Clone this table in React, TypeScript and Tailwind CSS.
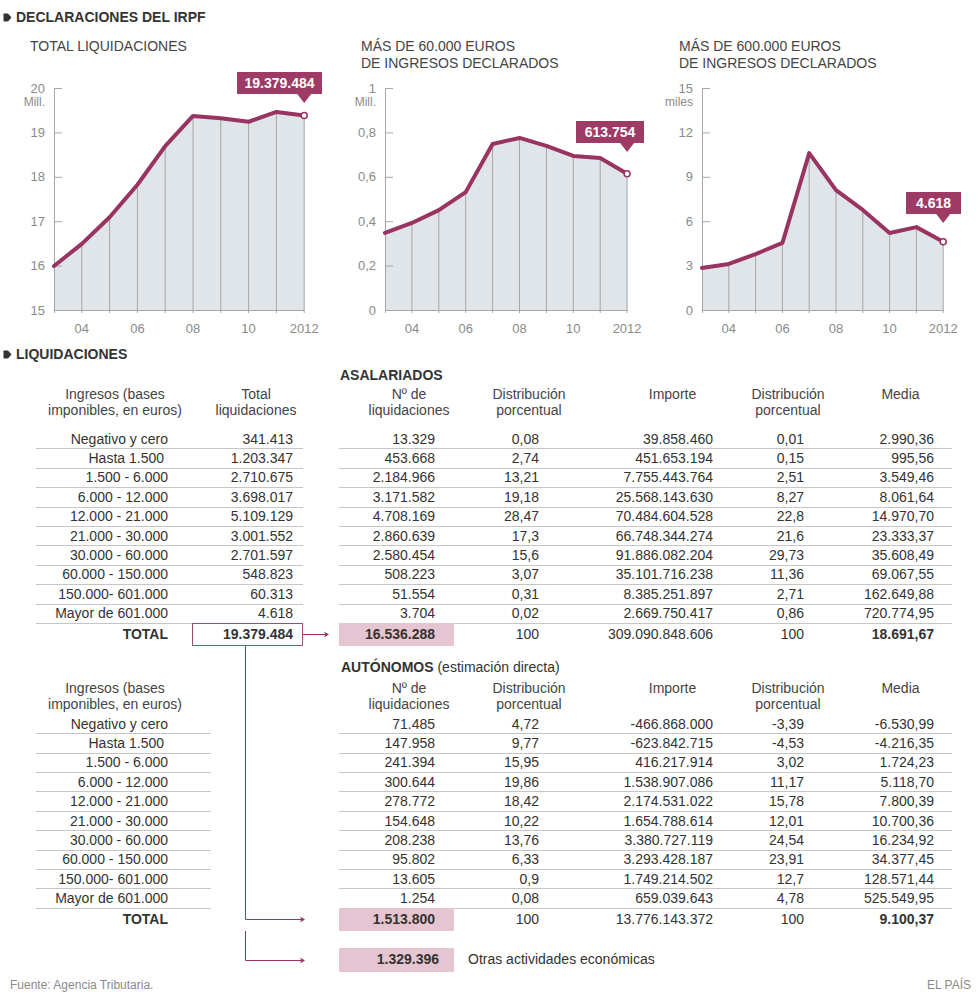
import React from "react";

type ChartProps = {
  width: number;
  x0: number;
  step: number;
  min: number;
  max: number;
  ticks: string[];
  unit: string;
  values: number[];
  label: string;
  boxX: number;
  boxW: number;
  boxY: number;
};

const LINE = "#993462";
const BOX = "#9e3b64";
const GRID = "#a6a6a6";

function Chart({ width, x0, step, min, max, ticks, unit, values, label, boxX, boxW, boxY }: ChartProps) {
  const top = 16;
  const bottom = 238;
  const y = (v: number) => bottom - ((v - min) / (max - min)) * (bottom - top);
  const xs = values.map((_, i) => x0 + i * step);
  const last = xs.length - 1;
  const pts = values.map((v, i) => `${xs[i]},${y(v)}`).join(" ");
  const tickGap = (bottom - top) / (ticks.length - 1);
  const years = ["04", "06", "08", "10", "2012"];

  return (
    <svg width={width} height={268} className="block">
      <polygon points={`${x0},${bottom} ${pts} ${xs[last]},${bottom}`} fill="#dfe5e8" />
      {xs.slice(1).map((x, i) => (
        <line key={i} x1={x} x2={x} y1={y(values[i + 1])} y2={bottom + 3} stroke={GRID} strokeWidth={1} />
      ))}
      <line x1={x0 + 0.5} x2={x0 + 0.5} y1={top} y2={bottom + 3} stroke={GRID} />
      <line x1={x0} x2={xs[last]} y1={bottom + 0.5} y2={bottom + 0.5} stroke={GRID} />
      {ticks.map((t, i) => (
        <g key={t}>
          <line x1={x0} x2={x0 + 8} y1={top + i * tickGap + 0.5} y2={top + i * tickGap + 0.5} stroke={GRID} />
          <text x={x0 - 9} y={top + i * tickGap + 4.5} textAnchor="end" fontSize={13} fill="#8a8a8a">
            {t}
          </text>
        </g>
      ))}
      <text x={x0 - 9} y={top + 18} textAnchor="end" fontSize={12} fill="#8a8a8a">
        {unit}
      </text>
      {years.map((yr, i) => (
        <text key={yr} x={xs[i * 2 + 1]} y={260.5} textAnchor="middle" fontSize={13} fill="#8a8a8a">
          {yr}
        </text>
      ))}
      <polyline points={pts} fill="none" stroke={LINE} strokeWidth={4} strokeLinejoin="round" strokeLinecap="round" />
      <circle cx={xs[last]} cy={y(values[last])} r={3} fill="#fff" stroke={LINE} strokeWidth={1.5} />
      <rect x={boxX} y={boxY} width={boxW} height={22} fill={BOX} />
      <polygon
        points={`${xs[last] - 7},${boxY + 22} ${xs[last] + 7},${boxY + 22} ${xs[last]},${boxY + 31}`}
        fill={BOX}
      />
      <text x={boxX + boxW / 2} y={boxY + 16} textAnchor="middle" fontSize={14} fontWeight={700} fill="#fff">
        {label}
      </text>
    </svg>
  );
}

function Bullet() {
  return (
    <svg width="9" height="9" viewBox="0 0 9 9" className="mr-[4px] shrink-0">
      <path d="M1.2 0.5 H5 L8.5 4.5 L5 8.5 H1.2 Q0.5 8.5 0.5 7.8 V1.2 Q0.5 0.5 1.2 0.5 Z" fill="#333" />
    </svg>
  );
}

const asalariados = [
  ["Negativo y cero", "341.413", "13.329", "0,08", "39.858.460", "0,01", "2.990,36"],
  ["Hasta 1.500", "1.203.347", "453.668", "2,74", "451.653.194", "0,15", "995,56"],
  ["1.500 - 6.000", "2.710.675", "2.184.966", "13,21", "7.755.443.764", "2,51", "3.549,46"],
  ["6.000 - 12.000", "3.698.017", "3.171.582", "19,18", "25.568.143.630", "8,27", "8.061,64"],
  ["12.000 - 21.000", "5.109.129", "4.708.169", "28,47", "70.484.604.528", "22,8", "14.970,70"],
  ["21.000 - 30.000", "3.001.552", "2.860.639", "17,3", "66.748.344.274", "21,6", "23.333,37"],
  ["30.000 - 60.000", "2.701.597", "2.580.454", "15,6", "91.886.082.204", "29,73", "35.608,49"],
  ["60.000 - 150.000", "548.823", "508.223", "3,07", "35.101.716.238", "11,36", "69.067,55"],
  ["150.000- 601.000", "60.313", "51.554", "0,31", "8.385.251.897", "2,71", "162.649,88"],
  ["Mayor de 601.000", "4.618", "3.704", "0,02", "2.669.750.417", "0,86", "720.774,95"],
];

const autonomos = [
  ["Negativo y cero", "71.485", "4,72", "-466.868.000", "-3,39", "-6.530,99"],
  ["Hasta 1.500", "147.958", "9,77", "-623.842.715", "-4,53", "-4.216,35"],
  ["1.500 - 6.000", "241.394", "15,95", "416.217.914", "3,02", "1.724,23"],
  ["6.000 - 12.000", "300.644", "19,86", "1.538.907.086", "11,17", "5.118,70"],
  ["12.000 - 21.000", "278.772", "18,42", "2.174.531.022", "15,78", "7.800,39"],
  ["21.000 - 30.000", "154.648", "10,22", "1.654.788.614", "12,01", "10.700,36"],
  ["30.000 - 60.000", "208.238", "13,76", "3.380.727.119", "24,54", "16.234,92"],
  ["60.000 - 150.000", "95.802", "6,33", "3.293.428.187", "23,91", "34.377,45"],
  ["150.000- 601.000", "13.605", "0,9", "1.749.214.502", "12,7", "128.571,44"],
  ["Mayor de 601.000", "1.254", "0,08", "659.039.643", "4,78", "525.549,95"],
];

function RightCells({ cells }: { cells: string[] }) {
  return (
    <div className="flex w-[613px] items-center border-b border-[#c6c6c6]">
      <div className="w-[115px] pr-[19px] text-right">{cells[0]}</div>
      <div className="w-[85px] text-right">{cells[1]}</div>
      <div className="w-[174px] text-right">{cells[2]}</div>
      <div className="w-[91px] text-right">{cells[3]}</div>
      <div className="w-[130px] text-right">{cells[4]}</div>
    </div>
  );
}

function RightHeader() {
  return (
    <div className="flex">
      <div className="w-[140px] text-center">
        Nº de
        <br />
        liquidaciones
      </div>
      <div className="ml-[5px] w-[90px] text-center">
        Distribución
        <br />
        porcentual
      </div>
      <div className="ml-[53px] w-[91px] text-center">Importe</div>
      <div className="ml-[25px] w-[90px] text-center">
        Distribución
        <br />
        porcentual
      </div>
      <div className="ml-[22px] w-[91px] text-center">Media</div>
    </div>
  );
}

function Label({ text }: { text: string }) {
  return <div className={text === "Hasta 1.500" ? "w-[132px] pr-[4px] text-right" : "w-[132px] text-right"}>{text}</div>;
}

function TotalRight({ cells }: { cells: string[] }) {
  return (
    <div className="flex w-[613px] items-center">
      <div className="flex h-[23px] w-[115px] items-center justify-end bg-[#e4c5d1] pr-[19px] font-bold">{cells[0]}</div>
      <div className="w-[85px] text-right">{cells[1]}</div>
      <div className="w-[174px] text-right">{cells[2]}</div>
      <div className="w-[91px] text-right">{cells[3]}</div>
      <div className="w-[130px] text-right font-bold">{cells[4]}</div>
    </div>
  );
}

function Arrow({ x, y }: { x: number; y: number }) {
  return <path d={`M${x - 5} ${y - 3} L${x} ${y} L${x - 5} ${y + 3} L${x - 3.5} ${y} Z`} fill={LINE} />;
}

export default function App() {
  return (
    <div className="relative h-[995px] w-[980px] overflow-hidden bg-white font-['Liberation_Sans',Arial,sans-serif] text-[14px] text-[#333]">
      <div className="flex h-[38px] items-start pl-[3px] pt-[9px]">
        <div className="flex h-[16px] items-center">
          <Bullet />
          <span className="text-[14px] font-bold leading-[16px] text-[#333]">DECLARACIONES DEL IRPF</span>
        </div>
      </div>

      <div className="flex h-[302px]">
        <div className="w-[330px]">
          <div className="h-[34px] pl-[30px] leading-[17px] text-[#444]">TOTAL LIQUIDACIONES</div>
          <Chart
            width={330}
            x0={54}
            step={27.8}
            min={15}
            max={20}
            ticks={["20", "19", "18", "17", "16", "15"]}
            unit="Mill."
            values={[15.99, 16.49, 17.09, 17.82, 18.69, 19.37, 19.32, 19.24, 19.46, 19.379]}
            label="19.379.484"
            boxX={237}
            boxW={85}
            boxY={0}
          />
        </div>
        <div className="w-[318px]">
          <div className="h-[34px] pl-[31px] leading-[17px] text-[#444]">
            MÁS DE 60.000 EUROS
            <br />
            DE INGRESOS DECLARADOS
          </div>
          <Chart
            width={318}
            x0={55}
            step={26.9}
            min={0}
            max={1}
            ticks={["1", "0,8", "0,6", "0,4", "0,2", "0"]}
            unit="Mill."
            values={[0.347, 0.392, 0.45, 0.531, 0.748, 0.775, 0.739, 0.694, 0.685, 0.614]}
            label="613.754"
            boxX={246}
            boxW={68}
            boxY={49}
          />
        </div>
        <div className="w-[332px]">
          <div className="h-[34px] pl-[31px] leading-[17px] text-[#444]">
            MÁS DE 600.000 EUROS
            <br />
            DE INGRESOS DECLARADOS
          </div>
          <Chart
            width={332}
            x0={54}
            step={26.8}
            min={0}
            max={15}
            ticks={["15", "12", "9", "6", "3", "0"]}
            unit="miles"
            values={[2.84, 3.11, 3.78, 4.53, 10.6, 8.1, 6.76, 5.2, 5.6, 4.618]}
            label="4.618"
            boxX={258}
            boxW={55}
            boxY={120}
          />
        </div>
      </div>

      <div className="flex items-center pl-[3px] pt-[6px]">
        <div className="flex h-[16px] items-center">
          <Bullet />
          <span className="text-[14px] font-bold leading-[16px]">LIQUIDACIONES</span>
        </div>
      </div>

      <div className="pl-[36px] leading-[15px]">
        <div className="ml-[304px] mt-[5px] font-bold leading-[16px]">ASALARIADOS</div>
        <div className="mt-[3px] flex h-[44px] leading-[16px] text-[#444]">
          <div className="w-[158px] text-center">
            Ingresos (bases
            <br />
            imponibles, en euros)
          </div>
          <div className="w-[124px] text-center">
            Total
            <br />
            liquidaciones
          </div>
          <div className="ml-[21px]">
            <RightHeader />
          </div>
        </div>
        {asalariados.map((r) => (
          <div key={r[0]} className="flex h-[19.4px]">
            <div className="flex w-[267px] items-center border-b border-[#c6c6c6]">
              <Label text={r[0]} />
              <div className="w-[135px] pr-[10px] text-right">{r[1]}</div>
            </div>
            <div className="w-[36px]" />
            <RightCells cells={r.slice(2)} />
          </div>
        ))}
        <div className="-mt-px flex h-[23px]">
          <div className="flex w-[267px] items-center">
            <div className="w-[132px] text-right font-bold">TOTAL</div>
            <div className="ml-[24px] flex h-[23px] w-[111px] items-center justify-end border border-[#a24a70] pr-[9px] font-bold">
              19.379.484
            </div>
          </div>
          <div className="w-[36px]" />
          <TotalRight cells={["16.536.288", "100", "309.090.848.606", "100", "18.691,67"]} />
        </div>

        <div className="ml-[305px] mt-[13px] leading-[16px]">
          <span className="font-bold">AUTÓNOMOS</span> (estimación directa)
        </div>
        <div className="mt-[5px] flex h-[35px] leading-[16px] text-[#444]">
          <div className="w-[158px] text-center">
            Ingresos (bases
            <br />
            imponibles, en euros)
          </div>
          <div className="ml-[145px]">
            <RightHeader />
          </div>
        </div>
        {autonomos.map((r) => (
          <div key={r[0]} className="flex h-[19.4px]">
            <div className="flex w-[175px] items-center border-b border-[#c6c6c6]">
              <Label text={r[0]} />
            </div>
            <div className="w-[128px]" />
            <RightCells cells={r.slice(1)} />
          </div>
        ))}
        <div className="-mt-px flex h-[23px]">
          <div className="flex w-[267px] items-center">
            <div className="w-[132px] text-right font-bold">TOTAL</div>
          </div>
          <div className="w-[36px]" />
          <TotalRight cells={["1.513.800", "100", "13.776.143.372", "100", "9.100,37"]} />
        </div>

        <div className="mt-[17px] flex h-[24px] items-center">
          <div className="ml-[303px] flex h-[24px] w-[115px] items-center justify-end bg-[#e4c5d1] pr-[15px] font-bold">
            1.329.396
          </div>
          <div className="ml-[14px]">Otras actividades económicas</div>
        </div>
      </div>

      <div className="mt-[5px] flex justify-between pl-[10px] pr-[9px] text-[12px] leading-[16px] text-[#8a8a8a]">
        <span>Fuente: Agencia Tributaria.</span>
        <span>EL PAÍS</span>
      </div>

      <svg className="pointer-events-none absolute left-0 top-0" width={980} height={995}>
        <line x1={303} x2={327} y1={634.5} y2={634.5} stroke={LINE} strokeWidth={1} />
        <Arrow x={329} y={634.5} />
        <polyline points="245.5,646 245.5,919.5 303,919.5" fill="none" stroke={LINE} strokeWidth={1} />
        <Arrow x={305} y={919.5} />
        <polyline points="245.5,931 245.5,960.5 303,960.5" fill="none" stroke={LINE} strokeWidth={1} />
        <Arrow x={305} y={960.5} />
      </svg>
    </div>
  );
}
